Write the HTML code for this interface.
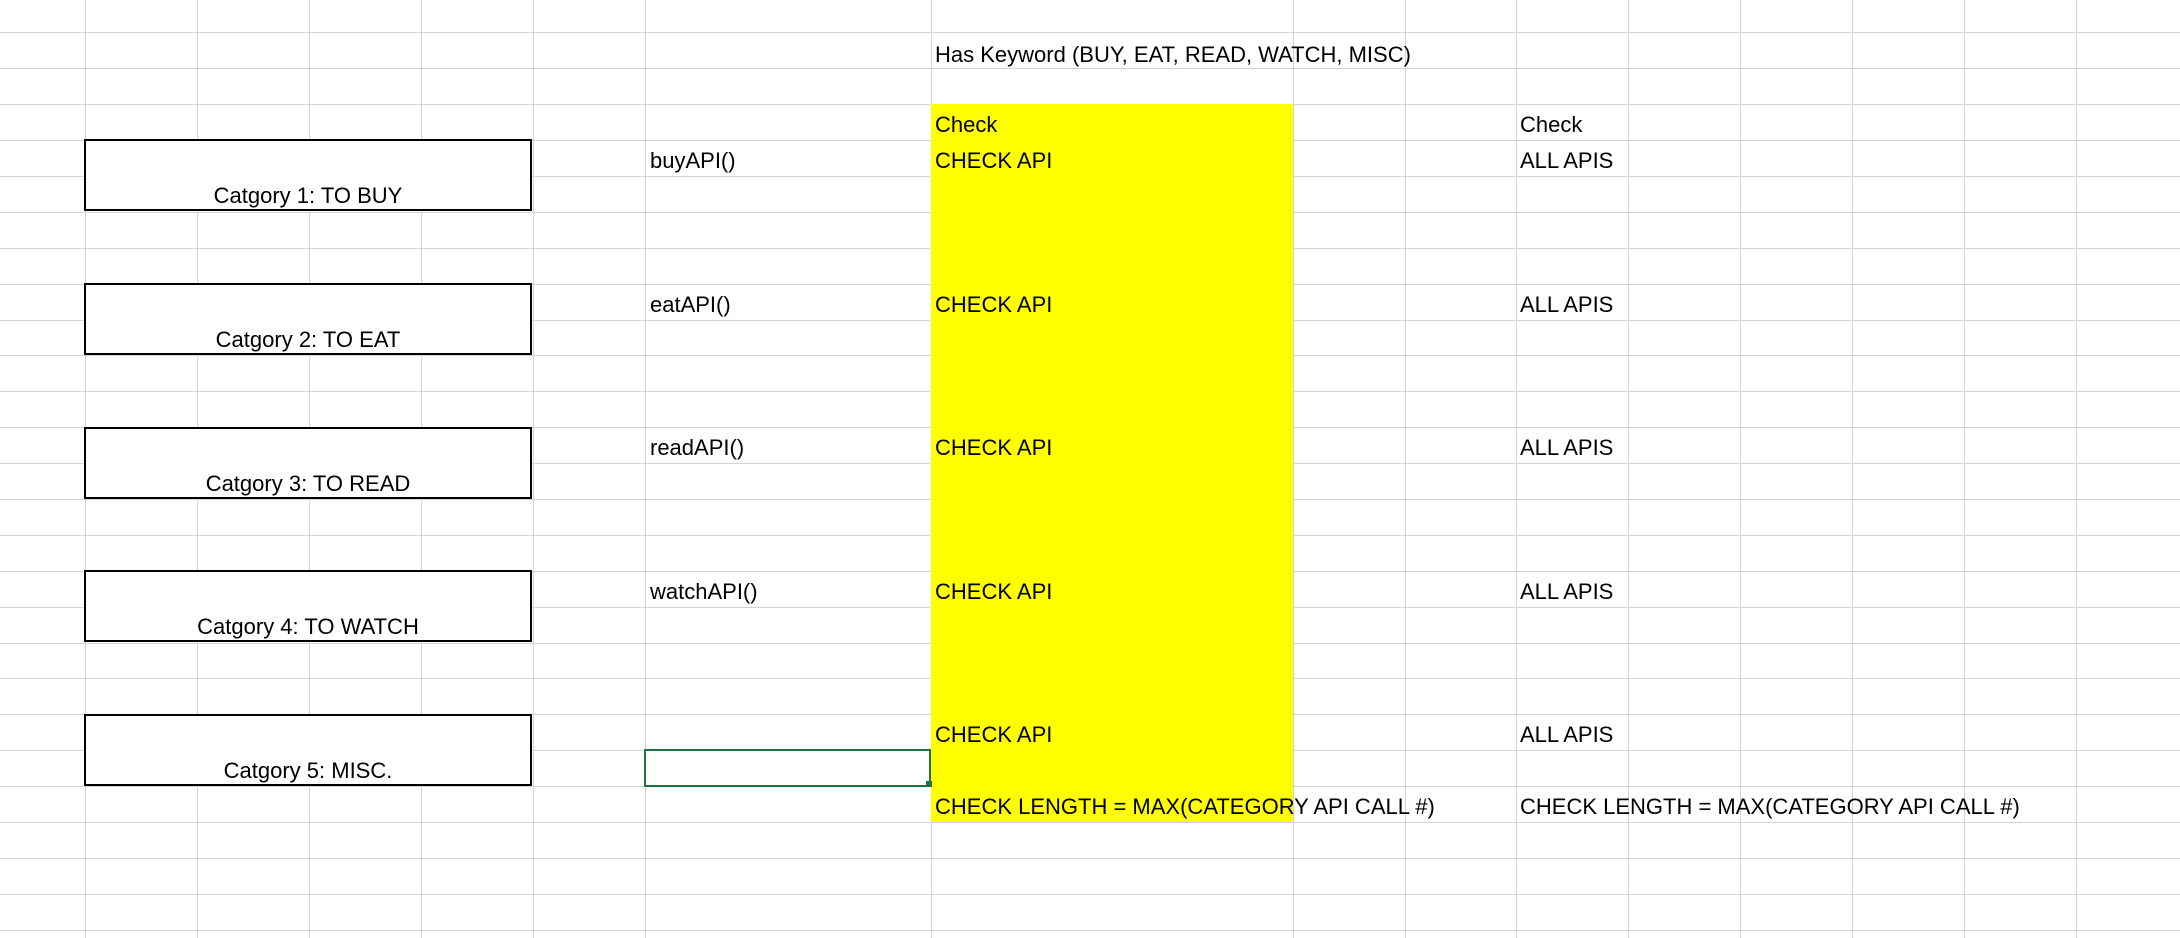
<!DOCTYPE html>
<html><head><meta charset="utf-8"><style>
html,body{margin:0;padding:0;width:2180px;height:938px;overflow:hidden;background:#fff;}
body{position:relative;font-family:"Liberation Sans",Arial,sans-serif;font-size:22px;color:#000;}
.h{position:absolute;left:0;width:2180px;height:1px;background:#d4d4d4;}
.v{position:absolute;top:0;height:938px;width:1px;background:#d4d4d4;}
.t{position:absolute;white-space:nowrap;line-height:36px;height:36px;}
.box{position:absolute;left:84px;width:444px;height:68px;border:2px solid #000;background:#fff;}
.box span{position:absolute;left:0;right:0;bottom:1px;text-align:center;line-height:24px;}
</style></head><body>
<div class="h" style="top:32px"></div><div class="h" style="top:68px"></div><div class="h" style="top:104px"></div><div class="h" style="top:140px"></div><div class="h" style="top:176px"></div><div class="h" style="top:212px"></div><div class="h" style="top:248px"></div><div class="h" style="top:284px"></div><div class="h" style="top:320px"></div><div class="h" style="top:355px"></div><div class="h" style="top:391px"></div><div class="h" style="top:427px"></div><div class="h" style="top:463px"></div><div class="h" style="top:499px"></div><div class="h" style="top:535px"></div><div class="h" style="top:571px"></div><div class="h" style="top:607px"></div><div class="h" style="top:643px"></div><div class="h" style="top:678px"></div><div class="h" style="top:714px"></div><div class="h" style="top:750px"></div><div class="h" style="top:786px"></div><div class="h" style="top:822px"></div><div class="h" style="top:858px"></div><div class="h" style="top:894px"></div><div class="h" style="top:930px"></div>
<div class="v" style="left:85px"></div><div class="v" style="left:197px"></div><div class="v" style="left:309px"></div><div class="v" style="left:421px"></div><div class="v" style="left:533px"></div><div class="v" style="left:645px"></div><div class="v" style="left:931px"></div><div class="v" style="left:1293px"></div><div class="v" style="left:1405px"></div><div class="v" style="left:1516px"></div><div class="v" style="left:1628px"></div><div class="v" style="left:1740px"></div><div class="v" style="left:1852px"></div><div class="v" style="left:1964px"></div><div class="v" style="left:2076px"></div>
<div style="position:absolute;left:931px;top:104px;width:362px;height:718px;background:#ffff00;"></div>
<div style="position:absolute;left:644px;top:749px;width:283px;height:34px;border:2px solid #217346;"></div>
<div style="position:absolute;left:926px;top:781px;width:6px;height:6px;background:#217346;"></div>

<div class="box" style="top:139px"><span>Catgory 1: TO BUY</span></div>
<div class="box" style="top:283px"><span>Catgory 2: TO EAT</span></div>
<div class="box" style="top:427px"><span>Catgory 3: TO READ</span></div>
<div class="box" style="top:570px"><span>Catgory 4: TO WATCH</span></div>
<div class="box" style="top:714px"><span>Catgory 5: MISC.</span></div>

<div class="t" style="left:935px;top:37px">Has Keyword (BUY, EAT, READ, WATCH, MISC)</div>
<div class="t" style="left:935px;top:107px">Check</div>
<div class="t" style="left:1520px;top:107px">Check</div>

<div class="t" style="left:650px;top:143px">buyAPI()</div>
<div class="t" style="left:935px;top:143px">CHECK API</div>
<div class="t" style="left:1520px;top:143px">ALL APIS</div>
<div class="t" style="left:650px;top:287px">eatAPI()</div>
<div class="t" style="left:935px;top:287px">CHECK API</div>
<div class="t" style="left:1520px;top:287px">ALL APIS</div>
<div class="t" style="left:650px;top:430px">readAPI()</div>
<div class="t" style="left:935px;top:430px">CHECK API</div>
<div class="t" style="left:1520px;top:430px">ALL APIS</div>
<div class="t" style="left:650px;top:574px">watchAPI()</div>
<div class="t" style="left:935px;top:574px">CHECK API</div>
<div class="t" style="left:1520px;top:574px">ALL APIS</div>
<div class="t" style="left:935px;top:717px">CHECK API</div>
<div class="t" style="left:1520px;top:717px">ALL APIS</div>
<div class="t" style="left:935px;top:789px">CHECK LENGTH = MAX(CATEGORY API CALL #)</div>
<div class="t" style="left:1520px;top:789px">CHECK LENGTH = MAX(CATEGORY API CALL #)</div>
</body></html>
